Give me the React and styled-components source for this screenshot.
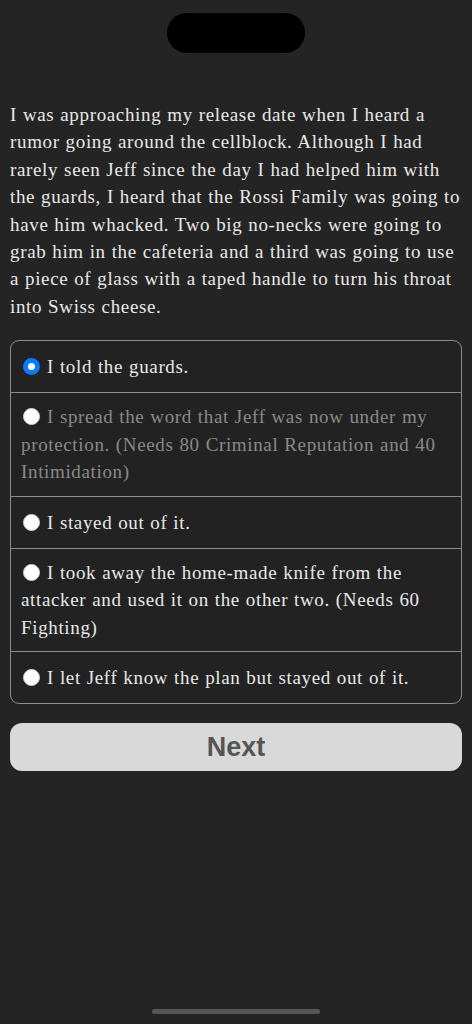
import React, { useState } from "react";
import styled, { createGlobalStyle } from "styled-components";

const Global = createGlobalStyle`
  html, body { margin: 0; padding: 0; background: #242424; }
  body { font-family: "Liberation Serif", "DejaVu Serif", serif; }
`;

const Screen = styled.div`
  width: 472px;
  height: 1024px;
  background: #242424;
  display: flex;
  flex-direction: column;
  position: relative;
  overflow: hidden;
`;

const Notch = styled.div`
  position: absolute;
  top: 13px;
  left: 167px;
  width: 138px;
  height: 40px;
  border-radius: 20px;
  background: #000;
`;

const Content = styled.main`
  padding: 101px 10px 0;
  display: flex;
  flex-direction: column;
`;

const Story = styled.p`
  margin: 0;
  color: #e8e8e8;
  font-size: 19px;
  line-height: 27.4px;
  letter-spacing: 0.65px;
  word-spacing: 0.5px;
`;

const Choices = styled.div`
  margin-top: 20px;
  border: 1px solid #8c8c8c;
  border-radius: 9px;
  background: #222;
  overflow: hidden;
`;

const Choice = styled.label`
  display: flex;
  align-items: center;
  box-sizing: border-box;
  min-height: 51px;
  padding: 10px 10px 10px;
  font-size: 19px;
  line-height: 27.5px;
  letter-spacing: 0.65px;
  word-spacing: 0.5px;
  color: ${(p) => (p.$disabled ? "#8a8a8a" : "#e8e8e8")};
  & + & {
    border-top: 1px solid #8c8c8c;
    min-height: 52px;
  }
`;

const ChoiceText = styled.span`
  display: block;
`;

const Radio = styled.span`
  display: inline-block;
  width: 17px;
  height: 17px;
  box-sizing: border-box;
  border-radius: 50%;
  margin: 0 7px 0 2px;
  vertical-align: -2px;
  background: #fff;
  border: ${(p) => (p.$checked ? "5px solid #0a7aff" : "1px solid #d0d0d0")};
`;

const NextButton = styled.button`
  margin-top: 19px;
  height: 48px;
  border: none;
  border-radius: 12px;
  background: #d9d9d9;
  color: #555;
  font-family: "Liberation Sans", Arial, sans-serif;
  font-weight: 700;
  font-size: 27px;
`;

const HomeBar = styled.div`
  position: absolute;
  bottom: 10px;
  left: 152px;
  width: 168px;
  height: 5px;
  border-radius: 3px;
  background: #555;
`;

const options = [
  { text: "I told the guards." },
  { text: "I spread the word that Jeff was now under my protection. (Needs 80 Criminal Reputation and 40 Intimidation)", disabled: true },
  { text: "I stayed out of it." },
  { text: "I took away the home-made knife from the attacker and used it on the other two. (Needs 60 Fighting)" },
  { text: "I let Jeff know the plan but stayed out of it." },
];

export default function App() {
  const [sel] = useState(0);
  return (
    <Screen>
      <Global />
      <Notch />
      <Content>
        <Story>
          I was approaching my release date when I heard a rumor going around the cellblock. Although I had rarely seen Jeff since the day I had helped him with the guards, I heard that the Rossi Family was going to have him whacked. Two big no-necks were going to grab him in the cafeteria and a third was going to use a piece of glass with a taped handle to turn his throat into Swiss cheese.
        </Story>
        <Choices>
          {options.map((o, i) => (
            <Choice key={i} $disabled={o.disabled}>
              <ChoiceText>
                <Radio $checked={i === sel} />
                {o.text}
              </ChoiceText>
            </Choice>
          ))}
        </Choices>
        <NextButton>Next</NextButton>
      </Content>
      <HomeBar />
    </Screen>
  );
}
